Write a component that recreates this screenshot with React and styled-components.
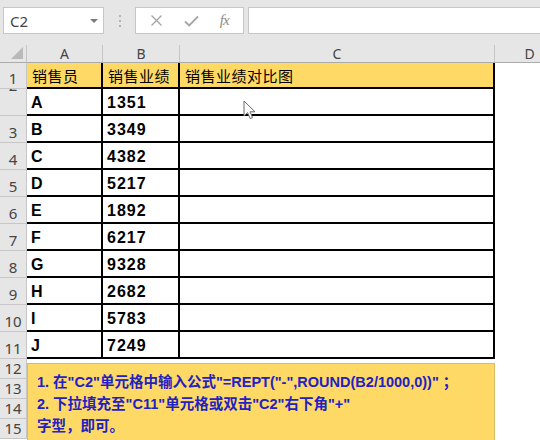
import React from "react";
import styled, { createGlobalStyle } from "styled-components";

const GlobalStyle = createGlobalStyle`
  html, body {
    margin: 0;
    padding: 0;
    background: #ffffff;
  }
  * {
    box-sizing: border-box;
  }
`;

const YELLOW = "#ffd966";
const HEAD_GRAY = "#e6e6e6";
const HEAD_LINE = "#c6c6c6";

const Window = styled.div`
  width: 540px;
  height: 440px;
  overflow: hidden;
  background: #ffffff;
  display: flex;
  flex-direction: column;
  font-family: "Liberation Sans", "Noto Sans CJK SC", sans-serif;
`;

const FormulaBar = styled.div`
  height: 45px;
  flex: none;
  background: ${HEAD_GRAY};
  display: flex;
  align-items: flex-start;
  padding: 7px 0 0 3px;
`;

const NameBox = styled.div`
  width: 101px;
  height: 27px;
  background: #ffffff;
  border: 1px solid ${HEAD_LINE};
  display: flex;
  align-items: center;
  justify-content: space-between;
  padding: 0 5px 0 6px;
  font-family: "Noto Sans", sans-serif;
  font-size: 15px;
  color: #444444;
`;

const Caret = styled.span`
  width: 0;
  height: 0;
  border-left: 4px solid transparent;
  border-right: 4px solid transparent;
  border-top: 4px solid #7a7a7a;
`;

const Dots = styled.div`
  width: 31px;
  height: 27px;
  display: flex;
  flex-direction: column;
  align-items: center;
  justify-content: center;
  gap: 3px;
  & > span {
    width: 2px;
    height: 2px;
    background: #b4b4b4;
  }
`;

const ButtonBox = styled.div`
  width: 109px;
  height: 27px;
  background: #ffffff;
  border: 1px solid ${HEAD_LINE};
  display: flex;
  align-items: center;
  justify-content: space-around;
  padding: 0 4px;
  color: #a6a6a6;
`;

const Fx = styled.span`
  font-family: "Liberation Serif", serif;
  font-style: italic;
  font-size: 15px;
  color: #8a8a8a;
  letter-spacing: -1px;
`;

const FormulaInput = styled.div`
  flex: 1;
  height: 27px;
  margin-left: 4px;
  background: #ffffff;
  border: 1px solid ${HEAD_LINE};
  border-right: none;
`;

const Sheet = styled.div`
  position: relative;
  flex: 1;
  display: flex;
  flex-direction: column;
  overflow: hidden;
`;

const Row = styled.div`
  display: flex;
  height: ${(p) => p.$h}px;
  flex: none;
`;

const Corner = styled.div`
  width: 27px;
  flex: none;
  background: ${HEAD_GRAY};
  border-right: 1px solid ${HEAD_LINE};
  border-bottom: 1px solid #ababab;
  position: relative;
  &::after {
    content: "";
    position: absolute;
    right: 3px;
    bottom: 3px;
    width: 0;
    height: 0;
    border-left: 12px solid transparent;
    border-bottom: 12px solid #b9b9b9;
  }
`;

const ColHead = styled.div`
  width: ${(p) => p.$w}px;
  flex: none;
  background: ${HEAD_GRAY};
  border-right: 1px solid ${HEAD_LINE};
  border-bottom: 1px solid #ababab;
  display: flex;
  align-items: center;
  justify-content: center;
  font-family: "Noto Sans", sans-serif;
  font-size: 14px;
  color: #444444;
  padding-bottom: 1px;
`;

const RowHead = styled.div`
  width: 27px;
  flex: none;
  background: ${HEAD_GRAY};
  border-right: 1px solid ${HEAD_LINE};
  border-bottom: 1px solid ${HEAD_LINE};
  display: flex;
  align-items: flex-end;
  justify-content: center;
  overflow: hidden;
  font-family: "Noto Sans", sans-serif;
  font-size: 15px;
  line-height: 18px;
  color: #444444;
  padding-bottom: 1px;
  & > span {
    transform: ${(p) => (p.$clipped ? "translateY(-20px)" : "none")};
  }
`;

const Cell = styled.div`
  width: ${(p) => p.$w}px;
  flex: none;
  background: ${(p) => (p.$title ? YELLOW : "#ffffff")};
  border-right: ${(p) => (p.$edge ? "2px solid #000000" : "none")};
  border-bottom: ${(p) => (p.$edge ? "2px solid #000000" : "none")};
  display: flex;
  align-items: center;
  padding: ${(p) => (p.$title ? "1px 0 0 5px" : "3px 0 0 4px")};
  white-space: nowrap;
  overflow: hidden;
  color: #000000;
  font-family: ${(p) =>
    p.$title
      ? '"Noto Sans CJK SC", sans-serif'
      : '"Liberation Sans", "Noto Sans CJK SC", sans-serif'};
  font-size: ${(p) => (p.$title ? 15 : 16)}px;
  font-weight: ${(p) => (p.$title ? 400 : 700)};
  letter-spacing: ${(p) => (p.$title ? "0.5px" : "1px")};
`;

const Note = styled.div`
  position: absolute;
  left: 27px;
  top: 318px;
  width: 468px;
  height: 90px;
  background: ${YELLOW};
  border: 1px solid #d8bb62;
  padding: 7px 0 0 9px;
  font-family: "Liberation Sans", "Noto Sans CJK SC", sans-serif;
  font-weight: 700;
  font-size: 14.5px;
  line-height: 22px;
  color: #2121c4;
  white-space: nowrap;
`;

const Cursor = styled.svg`
  position: absolute;
  left: 243px;
  top: 55px;
  width: 14px;
  height: 20px;
`;

const COLS = [
  { key: "A", w: 76 },
  { key: "B", w: 77 },
  { key: "C", w: 315 },
  { key: "D", w: 70 },
];

const DATA = [
  ["A", "1351"],
  ["B", "3349"],
  ["C", "4382"],
  ["D", "5217"],
  ["E", "1892"],
  ["F", "6217"],
  ["G", "9328"],
  ["H", "2682"],
  ["I", "5783"],
  ["J", "7249"],
];

const CrossIcon = () => (
  <svg width="13" height="13" viewBox="0 0 13 13">
    <path d="M1.5 1.5 L11.5 11.5 M11.5 1.5 L1.5 11.5" stroke="#a6a6a6" strokeWidth="1.4" fill="none" />
  </svg>
);

const CheckIcon = () => (
  <svg width="15" height="12" viewBox="0 0 15 12">
    <path d="M1 6.5 L5.2 10.5 L14 1.5" stroke="#a6a6a6" strokeWidth="1.8" fill="none" />
  </svg>
);

export default function App() {
  return (
    <>
      <GlobalStyle />
      <Window>
        <FormulaBar>
          <NameBox>
            <span>C2</span>
            <Caret />
          </NameBox>
          <Dots>
            <span />
            <span />
            <span />
          </Dots>
          <ButtonBox>
            <CrossIcon />
            <CheckIcon />
            <Fx>fx</Fx>
          </ButtonBox>
          <FormulaInput />
        </FormulaBar>

        <Sheet>
          <Row $h={18}>
            <Corner />
            {COLS.map((c) => (
              <ColHead key={c.key} $w={c.w}>
                {c.key}
              </ColHead>
            ))}
          </Row>

          <Row $h={26}>
            <RowHead>
              <span>1</span>
            </RowHead>
            <Cell $w={76} $title $edge>销售员</Cell>
            <Cell $w={77} $title $edge>销售业绩</Cell>
            <Cell $w={315} $title $edge>销售业绩对比图</Cell>
            <Cell $w={70} />
          </Row>

          {DATA.map(([name, value], i) => (
            <Row key={name} $h={27}>
              <RowHead $clipped={i === 0}>
                <span>{i + 2}</span>
              </RowHead>
              <Cell $w={76} $edge>{name}</Cell>
              <Cell $w={77} $edge>{value}</Cell>
              <Cell $w={315} $edge />
              <Cell $w={70} />
            </Row>
          ))}

          {[12, 13, 14, 15].map((n) => (
            <Row key={n} $h={20}>
              <RowHead>
                <span>{n}</span>
              </RowHead>
              <Cell $w={538} />
            </Row>
          ))}

          <Note>
            <div>1. 在"C2"单元格中输入公式"=REPT("-",ROUND(B2/1000,0))" ；</div>
            <div>2. 下拉填充至"C11"单元格或双击"C2"右下角"+"</div>
            <div>字型，即可。</div>
          </Note>

          <Cursor viewBox="0 0 14 20">
            <path
              d="M1 1 L1 16 L4.6 12.6 L7.2 18.6 L9.6 17.6 L7 11.8 L12 11.8 Z"
              fill="#ffffff"
              stroke="#6a6a6a"
              strokeWidth="1"
              strokeLinejoin="round"
            />
          </Cursor>
        </Sheet>
      </Window>
    </>
  );
}
